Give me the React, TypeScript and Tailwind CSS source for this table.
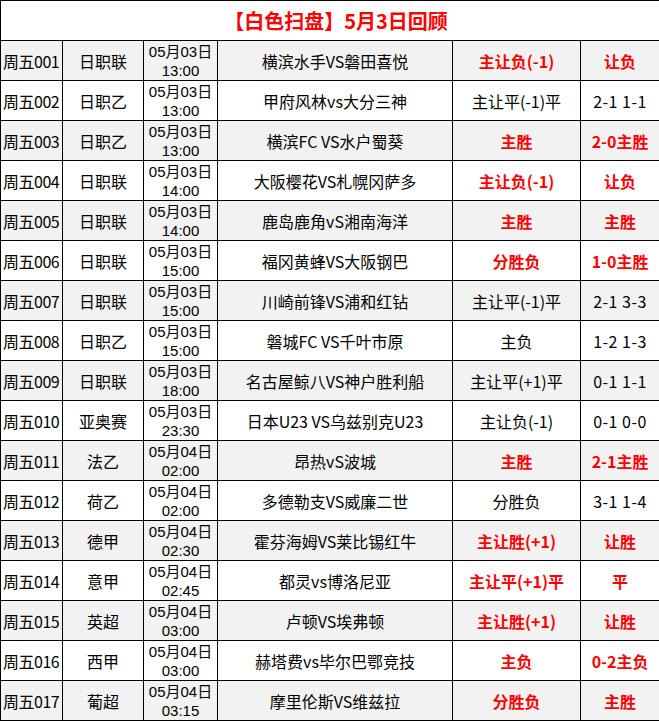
type Row = {
  no: string;
  league: string;
  date: string;
  time: string;
  match: string;
  play: string;
  result: string;
  hit: boolean;
};

const rows: Row[] = [
  { no: "001", league: "日职联", date: "05月03日", time: "13:00", match: "横滨水手VS磐田喜悦", play: "主让负(-1)", result: "让负", hit: true },
  { no: "002", league: "日职乙", date: "05月03日", time: "13:00", match: "甲府风林vs大分三神", play: "主让平(-1)平", result: "2-1 1-1", hit: false },
  { no: "003", league: "日职乙", date: "05月03日", time: "13:00", match: "横滨FC VS水户蜀葵", play: "主胜", result: "2-0主胜", hit: true },
  { no: "004", league: "日职联", date: "05月03日", time: "14:00", match: "大阪樱花VS札幌冈萨多", play: "主让负(-1)", result: "让负", hit: true },
  { no: "005", league: "日职联", date: "05月03日", time: "14:00", match: "鹿岛鹿角vS湘南海洋", play: "主胜", result: "主胜", hit: true },
  { no: "006", league: "日职联", date: "05月03日", time: "15:00", match: "福冈黄蜂VS大阪钢巴", play: "分胜负", result: "1-0主胜", hit: true },
  { no: "007", league: "日职联", date: "05月03日", time: "15:00", match: "川崎前锋VS浦和红钻", play: "主让平(-1)平", result: "2-1 3-3", hit: false },
  { no: "008", league: "日职乙", date: "05月03日", time: "15:00", match: "磐城FC VS千叶市原", play: "主负", result: "1-2 1-3", hit: false },
  { no: "009", league: "日职联", date: "05月03日", time: "18:00", match: "名古屋鲸八VS神户胜利船", play: "主让平(+1)平", result: "0-1 1-1", hit: false },
  { no: "010", league: "亚奥赛", date: "05月03日", time: "23:30", match: "日本U23 VS乌兹别克U23", play: "主让负(-1)", result: "0-1 0-0", hit: false },
  { no: "011", league: "法乙", date: "05月04日", time: "02:00", match: "昂热vS波城", play: "主胜", result: "2-1主胜", hit: true },
  { no: "012", league: "荷乙", date: "05月04日", time: "02:00", match: "多德勒支VS威廉二世", play: "分胜负", result: "3-1 1-4", hit: false },
  { no: "013", league: "德甲", date: "05月04日", time: "02:30", match: "霍芬海姆VS莱比锡红牛", play: "主让胜(+1)", result: "让胜", hit: true },
  { no: "014", league: "意甲", date: "05月04日", time: "02:45", match: "都灵vs博洛尼亚", play: "主让平(+1)平", result: "平", hit: true },
  { no: "015", league: "英超", date: "05月04日", time: "03:00", match: "卢顿VS埃弗顿", play: "主让胜(+1)", result: "让胜", hit: true },
  { no: "016", league: "西甲", date: "05月04日", time: "03:00", match: "赫塔费vs毕尔巴鄂竞技", play: "主负", result: "0-2主负", hit: true },
  { no: "017", league: "葡超", date: "05月04日", time: "03:15", match: "摩里伦斯VS维兹拉", play: "分胜负", result: "主胜", hit: true },
];

const cell = "border border-black text-center align-middle p-0 whitespace-nowrap";

export default function App() {
  return (
    <div className="w-[659px] bg-white text-black text-[16px] font-['SimSun','Noto_Sans_CJK_SC',sans-serif]">
      <table className="w-[659px] table-fixed border-collapse">
        <colgroup>
          <col className="w-[62px]" />
          <col className="w-[81px]" />
          <col className="w-[74px]" />
          <col className="w-[235px]" />
          <col className="w-[128px]" />
          <col className="w-[79px]" />
        </colgroup>
        <thead>
          <tr className="h-[40px]">
            <th colSpan={6} className={`${cell} text-[20px] font-bold text-[#ff0000] leading-none`}>
              <span className="pl-[12px]">【白色扫盘】5月3日回顾</span>
            </th>
          </tr>
        </thead>
        <tbody>
          {rows.map((r, i) => {
            const tone = r.hit ? "text-[#ff0000] font-bold" : "text-black";
            return (
              <tr key={r.no} className={`h-[40px] ${i % 2 === 0 ? "bg-[#f2f2f2]" : "bg-white"}`}>
                <td className={`${cell} text-left pl-[2px] tracking-[-0.5px]`}>周五{r.no}</td>
                <td className={cell}>{r.league}</td>
                <td className={`${cell} text-[15px] leading-[19px] font-['Liberation_Sans','Noto_Sans_CJK_SC',sans-serif]`}>
                  <div>{r.date}</div>
                  <div>{r.time}</div>
                </td>
                <td className={cell}>{r.match}</td>
                <td className={`${cell} ${tone}`}>{r.play}</td>
                <td className={`${cell} ${tone} ${r.hit ? "" : "tracking-[0.5px]"}`}>{r.result}</td>
              </tr>
            );
          })}
        </tbody>
      </table>
    </div>
  );
}
